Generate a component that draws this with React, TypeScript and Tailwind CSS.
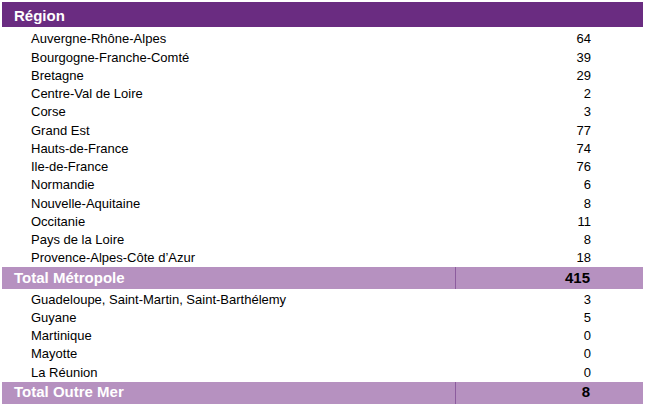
const metropole = [
  ["Auvergne-Rhône-Alpes", 64],
  ["Bourgogne-Franche-Comté", 39],
  ["Bretagne", 29],
  ["Centre-Val de Loire", 2],
  ["Corse", 3],
  ["Grand Est", 77],
  ["Hauts-de-France", 74],
  ["Ile-de-France", 76],
  ["Normandie", 6],
  ["Nouvelle-Aquitaine", 8],
  ["Occitanie", 11],
  ["Pays de la Loire", 8],
  ["Provence-Alpes-Côte d’Azur", 18],
] as const;

const outreMer = [
  ["Guadeloupe, Saint-Martin, Saint-Barthélemy", 3],
  ["Guyane", 5],
  ["Martinique", 0],
  ["Mayotte", 0],
  ["La Réunion", 0],
] as const;

function Row({ label, value }: { label: string; value: number }) {
  return (
    <div className="flex h-[18.25px] items-center text-[13px] text-black">
      <div className="pl-[29px] flex-1">{label}</div>
      <div className="w-[60px] text-right mr-[52px]">{value}</div>
    </div>
  );
}

function Total({ label, value }: { label: string; value: number }) {
  return (
    <div className="flex h-[22px] items-center bg-[#b691c0] text-[15px] font-bold">
      <div className="w-[453px] pl-[12px] text-white">{label}</div>
      <div className="h-full w-px bg-[#8c5c9e]" />
      <div className="flex-1 text-right pr-[53px] text-black">{value}</div>
    </div>
  );
}

export default function App() {
  return (
    <div
      className="w-[649px] h-[407px] overflow-hidden bg-white"
      style={{ fontFamily: '"Liberation Sans", Arial, sans-serif' }}
    >
      <div className="w-[641px] ml-[2px] pt-[2px]">
        <div className="flex h-[25px] items-center bg-[#6a2c81] pl-[12px] pt-[3px] text-[15px] font-bold text-white">
          Région
        </div>
        <div className="pt-[3px]">
          {metropole.map(([l, v]) => (
            <Row key={l} label={l} value={v} />
          ))}
        </div>
        <Total label="Total Métropole" value={415} />
        <div className="pt-[1px]">
          {outreMer.map(([l, v]) => (
            <Row key={l} label={l} value={v} />
          ))}
        </div>
        <Total label="Total Outre Mer" value={8} />
      </div>
    </div>
  );
}
